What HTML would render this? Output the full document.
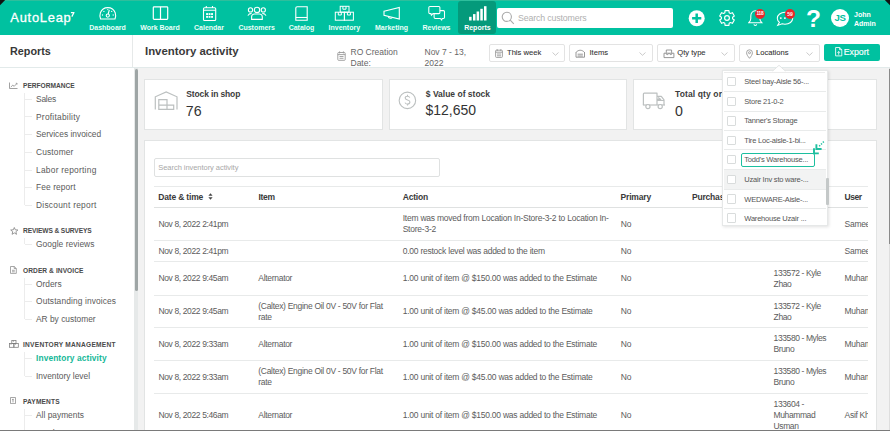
<!DOCTYPE html>
<html><head><meta charset="utf-8">
<style>
*{box-sizing:border-box;margin:0;padding:0}
html,body{width:890px;height:434px;overflow:hidden;background:#fff;font-family:"Liberation Sans",sans-serif;color:#444}
.a{position:absolute;white-space:nowrap}
#hdr{position:absolute;left:0;top:0;width:890px;height:35.4px;background:#00c1a0}
.nl{position:absolute;top:23.8px;font:bold 7px/8px "Liberation Sans",sans-serif;color:#eafff8;text-align:center;width:60px;margin-left:-30px}
.ni{position:absolute;top:5px}
#side{position:absolute;left:0;top:35px;width:133px;height:395px;background:#fff}
.sec{position:absolute;left:23px;font:bold 6.6px/8px "Liberation Sans",sans-serif;color:#4a4a4a;letter-spacing:0}
.it{position:absolute;left:36px;font:8.4px/10px "Liberation Sans",sans-serif;color:#5a5a5a}
.tree{position:absolute;left:24px;width:1px;background:#ececec}
.dash{position:absolute;left:25px;width:7px;height:1px;background:#ececec}
.si{position:absolute;left:9px}
#content{position:absolute;left:138px;top:68px;width:752px;height:362px;background:#f2f2f2}
.card{position:absolute;background:#fff;border:1px solid #e2e4e4}
.sel{position:absolute;top:44px;height:18px;border:1px solid #e3e3e3;border-radius:2px;background:#fff}
.sel .t{position:absolute;top:3.3px;font:7.6px/9px "Liberation Sans",sans-serif;color:#333;-webkit-text-stroke:0.08px #333}
.chev{position:absolute;top:6.6px;width:7px;height:4px}
.th{position:absolute;top:192px;font:bold 8px/9px "Liberation Sans",sans-serif;color:#3a3a3a}
.td{position:absolute;font:7.8px/10.8px "Liberation Sans",sans-serif;color:#555}
.hl{position:absolute;left:154px;width:713px;height:1px;background:#e6e6e6}
.dd{position:absolute;left:722px;width:104px;height:1px;background:#e9e9e9}
.cb{position:absolute;left:726.8px;width:9.4px;height:9.4px;border:1px solid #d9dcdc;border-radius:1px;background:#fff}
.dt{position:absolute;left:744px;font:7px/9px "Liberation Sans",sans-serif;color:#555}
</style></head><body>

<!-- HEADER -->
<div id="hdr">
  <div class="a" style="left:0;top:0;width:890px;height:1px;background:#2ebe9c"></div>
  <svg class="a" style="left:0;top:0" width="7" height="7"><path d="M0 0H5.2L0 5.2Z" fill="#111"/></svg>
  <svg class="a" style="left:883px;top:0" width="7" height="7"><path d="M1.8 0H7V5.2Z" fill="#111"/></svg>
  <div class="a" style="left:10.3px;top:9.9px;font:12.9px/15px 'Liberation Sans',sans-serif;color:#fff;letter-spacing:0.75px;-webkit-text-stroke:0.3px #fff">AutoLeap</div>
  <svg class="a" style="left:70px;top:11px" width="5" height="7" viewBox="0 0 5 7" fill="none" stroke="#fff" stroke-width="1.25" stroke-linejoin="round"><path d="M0.9 1.5H4L1.8 5.6"/></svg>

  <!-- Dashboard -->
  <svg class="ni" style="left:96px;top:3px" width="24" height="20" viewBox="0 0 24 20" fill="none" stroke="#fff" stroke-width="1.1"><path d="M4.6 16C3.8 14 3.7 11.8 4.4 9.8 5.6 6.4 8.5 4.6 11.8 4.6 15.1 4.6 18 6.4 19.2 9.8 19.9 11.8 19.8 14 19 16Z"/><circle cx="11.8" cy="12.6" r="1.6"/><path d="M12.2 11L13.3 6.8"/><g fill="#fff" stroke="none"><circle cx="7.9" cy="8.4" r=".65"/><circle cx="6.5" cy="12" r=".65"/><circle cx="15.7" cy="8.4" r=".65"/><circle cx="17.2" cy="12" r=".65"/><circle cx="11.8" cy="6.6" r=".6"/></g></svg>
  <div class="nl" style="left:107.5px">Dashboard</div>
  <!-- Work board -->
  <svg class="ni" style="left:152px;top:5px" width="17" height="16" viewBox="0 0 17 16" fill="none" stroke="#fff" stroke-width="1.2"><rect x="1.3" y="1.8" width="14.4" height="12.6" rx="0.8"/><path d="M8.5 1.8v12.6"/></svg>
  <div class="nl" style="left:160px">Work Board</div>
  <!-- Calendar -->
  <svg class="ni" style="left:202px;top:5px" width="15" height="17" viewBox="0 0 15 17" fill="none" stroke="#fff" stroke-width="1.1"><rect x="1.5" y="2.8" width="12.2" height="12.7" rx="1"/><path d="M1.5 5.3h12.2M4.3 1v2M10.5 1v2"/><g fill="#fff" stroke="none"><rect x="4.1" y="8.1" width="1.9" height="1.9"/><rect x="6.6" y="8.1" width="1.9" height="1.9"/><rect x="9.1" y="8.1" width="1.9" height="1.9"/><rect x="4.1" y="10.9" width="1.9" height="1.9"/><rect x="6.6" y="10.9" width="1.9" height="1.9"/><rect x="9.1" y="10.9" width="1.9" height="1.9"/></g></svg>
  <div class="nl" style="left:209px">Calendar</div>
  <!-- Customers -->
  <svg class="ni" style="left:244px;top:3px" width="26" height="20" viewBox="0 0 26 20" fill="none" stroke="#fff" stroke-width="1.1"><circle cx="13" cy="6.9" r="2.7"/><circle cx="6.5" cy="6.9" r="2.1"/><circle cx="19.3" cy="6.9" r="2.1"/><path d="M7.6 16.4V13.8C7.6 12 9.3 11 10.5 11H15.4C16.6 11 18.3 12 18.3 13.8V16.4Z"/><path d="M3.9 12.6C4.6 11 5.8 10.4 7.6 10.4M22 12.6C21.3 11 20.1 10.4 18.3 10.4"/></svg>
  <div class="nl" style="left:256.7px">Customers</div>
  <!-- Catalog -->
  <svg class="ni" style="left:290px;top:3px" width="22" height="20" viewBox="0 0 22 20" fill="none" stroke="#fff" stroke-width="1.1"><path d="M5.8 17.2V5C5.8 4.2 6.4 3.7 7.2 3.7H17.2V17.2Z"/><path d="M5.8 14.5H17.2"/></svg>
  <div class="nl" style="left:301.5px">Catalog</div>
  <!-- Inventory -->
  <svg class="ni" style="left:332px;top:3px" width="26" height="20" viewBox="0 0 26 20" fill="none" stroke="#fff" stroke-width="1"><rect x="8.2" y="3.3" width="8.8" height="5.9"/><rect x="3.3" y="9.2" width="9.1" height="8"/><rect x="12.4" y="9.2" width="9" height="8"/><path d="M10.9 3.3V6.2H14V3.3M6.3 9.2V12H9.3V9.2M15.4 9.2V12H18.4V9.2"/></svg>
  <div class="nl" style="left:344.3px">Inventory</div>
  <!-- Marketing -->
  <svg class="ni" style="left:378px;top:3px" width="26" height="20" viewBox="0 0 26 20" fill="none" stroke="#fff" stroke-width="1.1"><path d="M6 8.3L21.3 4.5V16L6 12.3Z"/><path d="M10.3 13.3C10.3 15.5 13.8 15.8 14.3 14.3"/></svg>
  <div class="nl" style="left:391.5px">Marketing</div>
  <!-- Reviews -->
  <svg class="ni" style="left:424px;top:3px" width="26" height="20" viewBox="0 0 26 20" fill="none" stroke="#fff" stroke-width="1.05"><path d="M6 3.5H14.8C15.4 3.5 15.9 4 15.9 4.6V9.5C15.9 10.1 15.4 10.6 14.8 10.6H9L7.4 12.3 7 10.6H6C5.4 10.6 4.8 10.1 4.8 9.5V4.6C4.8 4 5.4 3.5 6 3.5Z"/><path d="M15.9 7.6H19.4C20 7.6 20.5 8.1 20.5 8.7V14.3C20.5 14.9 20 15.4 19.4 15.4H18.2L17.7 17 16.3 15.4H11.2C10.6 15.4 10.1 14.9 10.1 14.3V10.6"/></svg>
  <div class="nl" style="left:436.5px">Reviews</div>
  <!-- Reports active -->
  <div class="a" style="left:458.3px;top:1.2px;width:37.5px;height:33.2px;background:#049a7b;border-radius:3px"></div>
  <svg class="ni" style="left:464px;top:3px" width="26" height="20" viewBox="0 0 26 20" fill="#fff"><rect x="5.1" y="13.8" width="2.5" height="3.7"/><rect x="9" y="11.1" width="2.5" height="6.4"/><rect x="12.6" y="8.5" width="2.5" height="9"/><rect x="16.3" y="5.8" width="2.5" height="11.7"/><rect x="20" y="3.2" width="2.5" height="14.3"/></svg>
  <div class="nl" style="left:477.4px;color:#fff">Reports</div>

  <!-- search -->
  <div class="a" style="left:497px;top:8px;width:176px;height:20px;background:#fff;border-radius:2px"></div>
  <svg class="a" style="left:501px;top:11px" width="14" height="14" viewBox="0 0 14 14" fill="none" stroke="#a9a9a9" stroke-width="1.1"><circle cx="5.8" cy="5.8" r="4.6"/><path d="M9.2 9.2L12.8 12.8"/></svg>
  <div class="a" style="left:518px;top:12.6px;font:8.8px/11px 'Liberation Sans',sans-serif;color:#b0b0b0;letter-spacing:-0.15px">Search customers</div>

  <!-- plus -->
  <svg class="a" style="left:688px;top:10px" width="18" height="17" viewBox="0 0 18 17"><circle cx="8.7" cy="8.25" r="8" fill="#fff"/><path d="M8.7 3.6v9.3M4.1 8.25h9.2" stroke="#00c1a0" stroke-width="2.5"/></svg>
  <!-- gear -->
  <svg class="a" style="left:718px;top:9.3px" width="18" height="18" viewBox="0 0 18 18" fill="none" stroke="#fff" stroke-width="1.1" stroke-linejoin="round"><path d="M6.82 3.84 L7.05 1.66 L10.95 1.66 L11.18 3.84 L12.38 4.53 L14.38 3.64 L16.34 7.02 L14.56 8.31 L14.56 9.69 L16.34 10.98 L14.38 14.36 L12.38 13.47 L11.18 14.16 L10.95 16.34 L7.05 16.34 L6.82 14.16 L5.62 13.47 L3.62 14.36 L1.66 10.98 L3.44 9.69 L3.44 8.31 L1.66 7.02 L3.62 3.64 L5.62 4.53Z"/><circle cx="9" cy="9" r="2.4" stroke-width="1.2"/></svg>
  <!-- bell -->
  <svg class="a" style="left:748px;top:10px" width="16" height="17" viewBox="0 0 16 17" fill="none" stroke="#fff" stroke-width="1.05"><path d="M0.8 12.7C2 11.5 2.8 10.5 2.8 8.5V6C2.8 3 4.8 0.8 7.3 0.8S11.8 3 11.8 6V8.5C11.8 10.5 12.6 11.5 13.8 12.7Z"/><path d="M6 14.3a1.3 1.2 0 0 0 2.6 0"/></svg>
  <div class="a" style="left:755px;top:8.8px;width:10px;height:10px;border-radius:50%;background:#e8262c;color:#fff;font:bold 4.8px/10px 'Liberation Sans',sans-serif;text-align:center;letter-spacing:-0.2px">118</div>
  <!-- chat -->
  <svg class="a" style="left:776px;top:10.5px" width="19" height="16" viewBox="0 0 19 16" fill="none" stroke="#fff" stroke-width="1.05"><path d="M9 1.2C4.8 1.2 1.3 3.9 1.3 7.2c0 1.6.8 3 2.1 4.1L1.7 14.4l4.4-1.6c.9.3 1.9.4 2.9.4 4.4 0 7.7-2.6 7.7-5.9S13.4 1.2 9 1.2Z"/><circle cx="4.8" cy="7.1" r=".45" fill="#fff"/><circle cx="8.9" cy="7.1" r=".45" fill="#fff"/></svg>
  <div class="a" style="left:785px;top:8.8px;width:10px;height:10px;border-radius:50%;background:#e8262c;color:#fff;font:bold 5px/10px 'Liberation Sans',sans-serif;text-align:center">59</div>
  <!-- ? -->
  <div class="a" style="left:806px;top:6.2px;font:bold 24.5px/25px 'Liberation Sans',sans-serif;color:#fff">?</div>
  <!-- avatar -->
  <div class="a" style="left:831px;top:9.2px;width:18px;height:18px;border-radius:50%;background:#fff;color:#00c1a0;font:bold 9.6px/18px 'Liberation Sans',sans-serif;text-align:center;letter-spacing:-0.3px">JS</div>
  <div class="a" style="left:854px;top:9.5px;font:bold 7px/9.4px 'Liberation Sans',sans-serif;color:#fff">John<br>Admin</div>
</div>

<!-- SIDEBAR -->
<div class="a" style="left:132px;top:35px;width:1px;height:33px;background:#e6e9e9"></div>
<div class="a" style="left:10px;top:44.8px;font:bold 10.8px/13px 'Liberation Sans',sans-serif;color:#383838">Reports</div>

<div id="sidebody">
<div class="sec" style="top:81.7px;letter-spacing:0px">PERFORMANCE</div>
<svg class="a" style="left:9px;top:81.5px" width="9" height="7" viewBox="0 0 9 7" fill="none" stroke="#8a8a8a" stroke-width="0.8"><path d="M0.5 0.5V6.5H8.5"/><path d="M1.8 5L3.8 3.2 5.2 4.3 7.8 1.6"/><path d="M6.8 1.3h1.2v1.2" /></svg>
<div class="tree" style="top:92.5px;height:112.5px"></div>
<div class="it" style="top:93.7px;letter-spacing:-0.2px">Sales</div>
<div class="dash" style="top:98.6px"></div>
<div class="it" style="top:111.5px;letter-spacing:0.25px">Profitability</div>
<div class="dash" style="top:116.4px"></div>
<div class="it" style="top:129.2px">Services invoiced</div>
<div class="dash" style="top:134.1px"></div>
<div class="it" style="top:146.9px;letter-spacing:0.15px">Customer</div>
<div class="dash" style="top:151.8px"></div>
<div class="it" style="top:164.6px;letter-spacing:0.25px">Labor reporting</div>
<div class="dash" style="top:169.5px"></div>
<div class="it" style="top:182.3px;letter-spacing:0.1px">Fee report</div>
<div class="dash" style="top:187.2px"></div>
<div class="it" style="top:200.1px;letter-spacing:0.25px">Discount report</div>
<div class="dash" style="top:205.0px"></div>
<div class="sec" style="top:227.4px;letter-spacing:-0.1px">REVIEWS &amp; SURVEYS</div>
<svg class="a" style="left:9.5px;top:226.7px" width="9" height="8" viewBox="0 0 9 8" fill="none" stroke="#7a7a7a" stroke-width="0.75"><path d="M4.3 0.5L5.3 2.8 7.9 3 5.9 4.7 6.5 7.3 4.3 5.9 2.1 7.3 2.7 4.7 0.7 3 3.3 2.8Z"/></svg>
<div class="tree" style="top:238.2px;height:5.9px"></div>
<div class="it" style="top:239.2px;letter-spacing:0.05px">Google reviews</div>
<div class="dash" style="top:244.1px"></div>
<div class="sec" style="top:266.7px;letter-spacing:0.08px">ORDER &amp; INVOICE</div>
<svg class="a" style="left:10px;top:266.0px" width="7" height="8" viewBox="0 0 7 8" fill="none" stroke="#8a8a8a" stroke-width="0.75"><path d="M0.5 0.5H4.2L6.3 2.5V7.4H0.5Z"/><path d="M4.2 0.5V2.5H6.3"/><path d="M2 4.3h2.8M2 5.8h2.8"/></svg>
<div class="tree" style="top:277.5px;height:41.7px"></div>
<div class="it" style="top:278.6px">Orders</div>
<div class="dash" style="top:283.5px"></div>
<div class="it" style="top:296.4px;letter-spacing:0.12px">Outstanding invoices</div>
<div class="dash" style="top:301.3px"></div>
<div class="it" style="top:314.3px">AR by customer</div>
<div class="dash" style="top:319.2px"></div>
<div class="sec" style="top:341.1px;letter-spacing:0.25px">INVENTORY MANAGEMENT</div>
<svg class="a" style="left:9.2px;top:340.4px" width="10" height="8" viewBox="0 0 10 8" fill="none" stroke="#7a7a7a" stroke-width="0.75"><rect x="2.8" y="0.5" width="4.2" height="3"/><rect x="0.5" y="3.5" width="4.4" height="3.8"/><rect x="4.9" y="3.5" width="4.4" height="3.8"/><path d="M4.4 0.5v1.2M2 3.5v1.2M6.6 3.5v1.2"/></svg>
<div class="tree" style="top:351.9px;height:24.1px"></div>
<div class="it" style="top:353.2px;color:#16b898;font-weight:bold;letter-spacing:0.1px">Inventory activity</div>
<div class="dash" style="top:358.1px"></div>
<div class="it" style="top:371.1px">Inventory level</div>
<div class="dash" style="top:376.0px"></div>
<div class="sec" style="top:398.0px;letter-spacing:0.15px">PAYMENTS</div>
<svg class="a" style="left:9.8px;top:397.3px" width="6" height="7" viewBox="0 0 6 7" fill="none" stroke="#8a8a8a" stroke-width="0.75"><path d="M0.5 0.5H5.5V6.6H0.5Z"/><path d="M3 1.8v3.6M2 2.6h1.6"/></svg>
<div class="tree" style="top:408.8px;height:21.2px"></div>
<div class="it" style="top:409.8px">All payments</div>
<div class="dash" style="top:414.7px"></div>
<div class="it" style="top:427.6px">Batch payments</div>
<div class="dash" style="top:432.5px"></div>

</div>

<!-- SUBHEADER -->
<div class="a" style="left:145px;top:44px;font:bold 11.4px/14px 'Liberation Sans',sans-serif;color:#3a3a3a">Inventory activity</div>
<svg class="a" style="left:337px;top:51px" width="9" height="10" viewBox="0 0 9 10" fill="none" stroke="#9a9a9a" stroke-width="0.9"><rect x="0.8" y="1.5" width="7.4" height="7.8" rx="0.8"/><path d="M0.8 3.6h7.4M2.6 0.4v2M6.4 0.4v2M2.5 5.5h4M2.5 7.3h4"/></svg>
<div class="a" style="left:350.5px;top:46.9px;font:8.5px/10.7px 'Liberation Sans',sans-serif;color:#666">RO Creation<br>Date:</div>
<div class="a" style="left:424.5px;top:46.9px;font:8.5px/10.7px 'Liberation Sans',sans-serif;color:#666">Nov 7 - 13,<br>2022</div>

<div class="sel" style="left:489px;width:75.5px"><svg class="a" style="left:5px;top:4px" width="8" height="9" viewBox="0 0 8 9" fill="none" stroke="#999" stroke-width="0.9"><rect x="0.6" y="1.2" width="6.8" height="7.2" rx="0.8"/><path d="M0.6 3.2h6.8M2.2 0.2v1.8M5.8 0.2v1.8M2 5h4M2 6.8h4"/></svg><div class="t" style="left:17px">This week</div><svg class="chev" style="left:62.0px" viewBox="0 0 7 4" fill="none" stroke="#c4c4c4" stroke-width="0.9"><path d="M0.5 0.5L3.5 3.3 6.5 0.5"/></svg></div>
<div class="sel" style="left:569px;width:84px"><svg class="a" style="left:5px;top:3.6px" width="11" height="9" viewBox="0 0 11 9" fill="none" stroke="#8c8c8c" stroke-width="0.9"><path d="M1.2 3.2C3.5 0.6 7 0.6 9.3 3.2"/><path d="M1 3V8.2H9.5V3"/><path d="M2.6 5.2H7.9M2.6 7H7.9"/></svg><div class="t" style="left:19.5px">Items</div><svg class="chev" style="left:69.0px" viewBox="0 0 7 4" fill="none" stroke="#c4c4c4" stroke-width="0.9"><path d="M0.5 0.5L3.5 3.3 6.5 0.5"/></svg></div>
<div class="sel" style="left:657px;width:77.5px"><svg class="a" style="left:5px;top:3.5px" width="12" height="10" viewBox="0 0 12 10" fill="none" stroke="#8c8c8c" stroke-width="0.9"><path d="M3.3 3.8V1H8.6V3.8"/><path d="M1 4.2H10.9V8.6H1Z"/><path d="M2.8 4.6L4.3 5.6 5.8 4.6M6.3 4.6L7.8 5.6 9.3 4.6" stroke-width="1"/></svg><div class="t" style="left:19.3px">Qty type</div><svg class="chev" style="left:63.0px" viewBox="0 0 7 4" fill="none" stroke="#c4c4c4" stroke-width="0.9"><path d="M0.5 0.5L3.5 3.3 6.5 0.5"/></svg></div>
<div class="sel" style="left:739px;width:80.5px"><svg class="a" style="left:5.5px;top:3.5px" width="7" height="10" viewBox="0 0 7 10" fill="none" stroke="#999" stroke-width="0.9"><path d="M3.5 9.3C1.8 7.2 0.6 5.6 0.6 3.7a2.9 2.9 0 0 1 5.8 0c0 1.9-1.2 3.5-2.9 5.6Z"/><circle cx="3.5" cy="3.7" r="1"/></svg><div class="t" style="left:16px">Locations</div><svg class="chev" style="left:66.0px" viewBox="0 0 7 4" fill="none" stroke="#c4c4c4" stroke-width="0.9"><path d="M0.5 0.5L3.5 3.3 6.5 0.5"/></svg></div>
<div class="a" style="left:824px;top:44px;width:56px;height:17px;background:#00c1a0;border-radius:2px"></div>
<svg class="a" style="left:834.6px;top:46.6px" width="8" height="10" viewBox="0 0 8 10" fill="none" stroke="#fff" stroke-width="0.85"><path d="M0.6 0.5H4.7L6.8 2.6V8.9H0.6Z"/><path d="M4.6 0.5V2.7H6.8"/><path d="M3.7 7.7V4.6M2.5 5.8L3.7 4.5 4.9 5.8"/></svg>
<div class="a" style="left:843.8px;top:47px;font:8.8px/10px 'Liberation Sans',sans-serif;color:#fff;letter-spacing:-0.05px;-webkit-text-stroke:0.15px #fff">Export</div>

<!-- CONTENT -->
<div id="content"></div>
<div class="a" style="left:0;top:67.4px;width:890px;height:1px;background:#e2eaea"></div>
<div class="a" style="left:134.3px;top:68px;width:3.8px;height:362px;background:#e6e9e9"></div>
<div class="a" style="left:134.5px;top:69px;width:3.5px;height:222px;background:#9ea5a5;border-radius:2px"></div>
<div class="a" style="left:888.8px;top:68px;width:1.2px;height:362px;background:#dedede"></div>
<div class="a" style="left:888.6px;top:69px;width:1.4px;height:175px;background:#8a8a8a"></div>

<div class="card" style="left:144px;top:79px;width:238.6px;height:50.5px"></div>
<div class="card" style="left:389px;top:79px;width:237.5px;height:50.5px"></div>
<div class="card" style="left:633px;top:79px;width:243.5px;height:50.5px"></div>

<div class="card" style="left:144px;top:140px;width:732.6px;height:300px"></div>

<!-- MAIN -->
<svg class="a" style="left:153.5px;top:90.5px" width="24" height="19" viewBox="0 0 24 19" fill="none" stroke="#bcc0c0" stroke-width="1.2"><path d="M1.3 18.4V5.8L12.2 1 23 5.8V18.4"/><path d="M4.8 18.4V8.7H13V18.4ZM4.8 14.2H19.7V18.4H13"/></svg>
<div class="a" style="left:186.3px;top:89.2px;font:bold 8.5px/10px 'Liberation Sans',sans-serif;color:#3c3c3c;letter-spacing:-0.14px">Stock in shop</div>
<div class="a" style="left:185.8px;top:103.0px;font:14.2px/16px 'Liberation Sans',sans-serif;color:#333">76</div>
<svg class="a" style="left:398px;top:91px" width="19" height="19" viewBox="0 0 19 19" fill="none" stroke="#bcc0c0" stroke-width="1.1"><circle cx="9.4" cy="9.4" r="8.25"/><path d="M11.8 6.6C11.4 5.7 10.6 5.2 9.5 5.2 8.2 5.2 7.2 5.9 7.2 7 7.2 8.2 8.3 8.7 9.5 9 10.8 9.3 11.9 9.9 11.9 11.1 11.9 12.3 10.9 13.1 9.5 13.1 8.3 13.1 7.4 12.5 7 11.6M9.5 3.8V5.2M9.5 13.1V14.6"/></svg>
<div class="a" style="left:425.8px;top:89.2px;font:bold 8.5px/10px 'Liberation Sans',sans-serif;color:#3c3c3c">$ Value of stock</div>
<div class="a" style="left:425.5px;top:102.1px;font:14px/16px 'Liberation Sans',sans-serif;color:#333">$12,650</div>
<svg class="a" style="left:642px;top:92px" width="24" height="18" viewBox="0 0 24 18" fill="none" stroke="#bcc0c0" stroke-width="1.2" stroke-linejoin="round"><path d="M1.4 13V2C1.4 1.5 1.8 1.1 2.3 1.1H15V13"/><path d="M15 4.3H19.3L22 7.8V13"/><path d="M16.2 5.5L18.8 7.4H15M15 8.5H22"/><path d="M0.9 13H23"/><circle cx="5.9" cy="14.6" r="2.1" fill="#fff"/><circle cx="18.2" cy="14.6" r="2.1" fill="#fff"/></svg>
<div class="a" style="left:675px;top:89.2px;font:bold 8.5px/10px 'Liberation Sans',sans-serif;color:#3c3c3c;letter-spacing:0.12px">Total qty ordered</div>
<div class="a" style="left:675px;top:103.0px;font:14.2px/16px 'Liberation Sans',sans-serif;color:#333">0</div>
<div class="a" style="left:153.8px;top:157.8px;width:286.2px;height:19px;border:1px solid #dfe1e1;border-radius:2px;background:#fff"></div>
<div class="a" style="left:158.3px;top:163.1px;font:7.5px/9px 'Liberation Sans',sans-serif;color:#a8a8a8;letter-spacing:-0.05px">Search inventory activity</div>
<div class="a" style="left:154px;top:185px;width:713.5px;height:250px;overflow:hidden">
<div class="a" style="left:0.0px;top:0.8px;width:714px;height:1px;background:#e8eaea"></div>
<div class="a" style="left:4.3px;top:6.6px;font:bold 8.5px/10px 'Liberation Sans',sans-serif;color:#3a3a3a;letter-spacing:-0.18px">Date &amp; time</div>
<div class="a" style="left:104.5px;top:6.6px;font:bold 8.5px/10px 'Liberation Sans',sans-serif;color:#3a3a3a;letter-spacing:-0.3px">Item</div>
<div class="a" style="left:248.7px;top:6.6px;font:bold 8.5px/10px 'Liberation Sans',sans-serif;color:#3a3a3a;letter-spacing:-0.18px">Action</div>
<div class="a" style="left:466.5px;top:6.6px;font:bold 8.5px/10px 'Liberation Sans',sans-serif;color:#3a3a3a;letter-spacing:-0.16px">Primary</div>
<div class="a" style="left:537.9px;top:6.6px;font:bold 8.5px/10px 'Liberation Sans',sans-serif;color:#3a3a3a;letter-spacing:-0.18px">Purchase price</div>
<div class="a" style="left:619.6px;top:6.6px;font:bold 8.5px/10px 'Liberation Sans',sans-serif;color:#3a3a3a;letter-spacing:-0.18px">Estimate</div>
<div class="a" style="left:690.4px;top:6.6px;font:bold 8.5px/10px 'Liberation Sans',sans-serif;color:#3a3a3a;letter-spacing:-0.4px">User</div>
<svg class="a" style="left:54.3px;top:8.0px" width="5" height="7" viewBox="0 0 5 7" fill="#444"><path d="M2.5 0.2L4.6 2.8H0.4Z"/><path d="M2.5 6.8L4.6 4.2H0.4Z"/></svg>
<div class="a" style="left:0.0px;top:22.1px;width:714px;height:1.3px;background:#dfe1e1"></div>
<div class="a" style="left:0.0px;top:54.9px;width:714px;height:1px;background:#e8eaea"></div>
<div class="a" style="left:4.4px;top:33.7px;font:8.5px/11.1px 'Liberation Sans',sans-serif;color:#5c5c5c;letter-spacing:-0.37px">Nov 8, 2022 2:41pm</div>
<div class="a" style="left:248.7px;top:28.2px;font:8.5px/11.1px 'Liberation Sans',sans-serif;color:#5c5c5c;letter-spacing:-0.24px">Item was moved from Location In-Store-3-2 to Location In-<br>Store-3-2</div>
<div class="a" style="left:466.7px;top:33.7px;font:8.5px/11.1px 'Liberation Sans',sans-serif;color:#5c5c5c;letter-spacing:-0.2px">No</div>
<div class="a" style="left:690.6px;top:33.7px;font:8.5px/11.1px 'Liberation Sans',sans-serif;color:#5c5c5c;letter-spacing:-0.3px">Sameer Ahmed</div>
<div class="a" style="left:0.0px;top:76.1px;width:714px;height:1px;background:#e8eaea"></div>
<div class="a" style="left:4.4px;top:61.2px;font:8.5px/11.1px 'Liberation Sans',sans-serif;color:#5c5c5c;letter-spacing:-0.37px">Nov 8, 2022 2:41pm</div>
<div class="a" style="left:248.7px;top:61.2px;font:8.5px/11.1px 'Liberation Sans',sans-serif;color:#5c5c5c;letter-spacing:-0.24px">0.00 restock level was added to the item</div>
<div class="a" style="left:466.7px;top:61.2px;font:8.5px/11.1px 'Liberation Sans',sans-serif;color:#5c5c5c;letter-spacing:-0.2px">No</div>
<div class="a" style="left:690.6px;top:61.2px;font:8.5px/11.1px 'Liberation Sans',sans-serif;color:#5c5c5c;letter-spacing:-0.3px">Sameer Ahmed</div>
<div class="a" style="left:0.0px;top:109.6px;width:714px;height:1px;background:#e8eaea"></div>
<div class="a" style="left:4.4px;top:88.3px;font:8.5px/11.1px 'Liberation Sans',sans-serif;color:#5c5c5c;letter-spacing:-0.37px">Nov 8, 2022 9:45am</div>
<div class="a" style="left:104.3px;top:88.3px;font:8.5px/11.1px 'Liberation Sans',sans-serif;color:#5c5c5c;letter-spacing:-0.3px">Alternator</div>
<div class="a" style="left:248.7px;top:88.3px;font:8.5px/11.1px 'Liberation Sans',sans-serif;color:#5c5c5c;letter-spacing:-0.24px">1.00 unit of item @ $150.00 was added to the Estimate</div>
<div class="a" style="left:466.7px;top:88.3px;font:8.5px/11.1px 'Liberation Sans',sans-serif;color:#5c5c5c;letter-spacing:-0.2px">No</div>
<div class="a" style="left:619.6px;top:82.8px;font:8.5px/11.1px 'Liberation Sans',sans-serif;color:#5c5c5c;letter-spacing:-0.4px">133572 - Kyle<br>Zhao</div>
<div class="a" style="left:690.6px;top:88.3px;font:8.5px/11.1px 'Liberation Sans',sans-serif;color:#5c5c5c;letter-spacing:-0.3px">Muhammad</div>
<div class="a" style="left:0.0px;top:142.0px;width:714px;height:1px;background:#e8eaea"></div>
<div class="a" style="left:4.4px;top:121.2px;font:8.5px/11.1px 'Liberation Sans',sans-serif;color:#5c5c5c;letter-spacing:-0.37px">Nov 8, 2022 9:45am</div>
<div class="a" style="left:104.3px;top:115.7px;font:8.5px/11.1px 'Liberation Sans',sans-serif;color:#5c5c5c;letter-spacing:-0.3px">(Caltex) Engine Oil 0V - 50V for Flat<br>rate</div>
<div class="a" style="left:248.7px;top:121.2px;font:8.5px/11.1px 'Liberation Sans',sans-serif;color:#5c5c5c;letter-spacing:-0.24px">1.00 unit of item @ $45.00 was added to the Estimate</div>
<div class="a" style="left:466.7px;top:121.2px;font:8.5px/11.1px 'Liberation Sans',sans-serif;color:#5c5c5c;letter-spacing:-0.2px">No</div>
<div class="a" style="left:619.6px;top:115.7px;font:8.5px/11.1px 'Liberation Sans',sans-serif;color:#5c5c5c;letter-spacing:-0.4px">133572 - Kyle<br>Zhao</div>
<div class="a" style="left:690.6px;top:121.2px;font:8.5px/11.1px 'Liberation Sans',sans-serif;color:#5c5c5c;letter-spacing:-0.3px">Muhammad</div>
<div class="a" style="left:0.0px;top:174.9px;width:714px;height:1px;background:#e8eaea"></div>
<div class="a" style="left:4.4px;top:153.7px;font:8.5px/11.1px 'Liberation Sans',sans-serif;color:#5c5c5c;letter-spacing:-0.37px">Nov 8, 2022 9:33am</div>
<div class="a" style="left:104.3px;top:153.7px;font:8.5px/11.1px 'Liberation Sans',sans-serif;color:#5c5c5c;letter-spacing:-0.3px">Alternator</div>
<div class="a" style="left:248.7px;top:153.7px;font:8.5px/11.1px 'Liberation Sans',sans-serif;color:#5c5c5c;letter-spacing:-0.24px">1.00 unit of item @ $150.00 was added to the Estimate</div>
<div class="a" style="left:466.7px;top:153.7px;font:8.5px/11.1px 'Liberation Sans',sans-serif;color:#5c5c5c;letter-spacing:-0.2px">No</div>
<div class="a" style="left:619.6px;top:148.2px;font:8.5px/11.1px 'Liberation Sans',sans-serif;color:#5c5c5c;letter-spacing:-0.4px">133580 - Myles<br>Bruno</div>
<div class="a" style="left:690.6px;top:153.7px;font:8.5px/11.1px 'Liberation Sans',sans-serif;color:#5c5c5c;letter-spacing:-0.3px">Muhammad</div>
<div class="a" style="left:0.0px;top:208.0px;width:714px;height:1px;background:#e8eaea"></div>
<div class="a" style="left:4.4px;top:186.9px;font:8.5px/11.1px 'Liberation Sans',sans-serif;color:#5c5c5c;letter-spacing:-0.37px">Nov 8, 2022 9:33am</div>
<div class="a" style="left:104.3px;top:181.4px;font:8.5px/11.1px 'Liberation Sans',sans-serif;color:#5c5c5c;letter-spacing:-0.3px">(Caltex) Engine Oil 0V - 50V for Flat<br>rate</div>
<div class="a" style="left:248.7px;top:186.9px;font:8.5px/11.1px 'Liberation Sans',sans-serif;color:#5c5c5c;letter-spacing:-0.24px">1.00 unit of item @ $45.00 was added to the Estimate</div>
<div class="a" style="left:466.7px;top:186.9px;font:8.5px/11.1px 'Liberation Sans',sans-serif;color:#5c5c5c;letter-spacing:-0.2px">No</div>
<div class="a" style="left:619.6px;top:181.4px;font:8.5px/11.1px 'Liberation Sans',sans-serif;color:#5c5c5c;letter-spacing:-0.4px">133580 - Myles<br>Bruno</div>
<div class="a" style="left:690.6px;top:186.9px;font:8.5px/11.1px 'Liberation Sans',sans-serif;color:#5c5c5c;letter-spacing:-0.3px">Muhammad</div>
<div class="a" style="left:4.4px;top:225.3px;font:8.5px/11.1px 'Liberation Sans',sans-serif;color:#5c5c5c;letter-spacing:-0.37px">Nov 8, 2022 5:46am</div>
<div class="a" style="left:104.3px;top:225.3px;font:8.5px/11.1px 'Liberation Sans',sans-serif;color:#5c5c5c;letter-spacing:-0.3px">Alternator</div>
<div class="a" style="left:248.7px;top:225.3px;font:8.5px/11.1px 'Liberation Sans',sans-serif;color:#5c5c5c;letter-spacing:-0.24px">1.00 unit of item @ $150.00 was added to the Estimate</div>
<div class="a" style="left:466.7px;top:225.3px;font:8.5px/11.1px 'Liberation Sans',sans-serif;color:#5c5c5c;letter-spacing:-0.2px">No</div>
<div class="a" style="left:619.6px;top:214.2px;font:8.5px/11.1px 'Liberation Sans',sans-serif;color:#5c5c5c;letter-spacing:-0.4px">133604 -<br>Muhammad<br>Usman</div>
<div class="a" style="left:690.6px;top:225.3px;font:8.5px/11.1px 'Liberation Sans',sans-serif;color:#5c5c5c;letter-spacing:-0.3px">Asif Khan</div>
</div>
<div class="a" style="left:721.8px;top:70px;width:106.5px;height:155.5px;background:#fff;border:1px solid #e6e8e8;box-shadow:1px 1px 3px rgba(0,0,0,0.12)"></div>
<svg class="a" style="left:772.2px;top:63.6px" width="14" height="8" viewBox="0 0 14 8"><path d="M0.5 7.2L7 1.3 13.5 7.2" fill="#fff" stroke="#e3e5e5" stroke-width="1"/><path d="M0.5 7.9H13.5" stroke="#fff" stroke-width="1.4"/></svg>
<div class="a" style="left:724px;top:71.5px;width:101px;height:1px;background:#ececec"></div>
<div class="cb" style="top:77.1px"></div>
<div class="a" style="left:744.3px;top:77.3px;font:7.5px/9px 'Liberation Sans',sans-serif;color:#555;letter-spacing:-0.21px">Steel bay-Aisle 56-...</div>
<div class="a" style="left:723.5px;top:90.9px;width:102px;height:1px;background:#e9ebeb"></div>
<div class="cb" style="top:96.6px"></div>
<div class="a" style="left:744.3px;top:96.8px;font:7.5px/9px 'Liberation Sans',sans-serif;color:#555;letter-spacing:-0.21px">Store 21-0-2</div>
<div class="a" style="left:723.5px;top:110.5px;width:102px;height:1px;background:#e9ebeb"></div>
<div class="cb" style="top:116.2px"></div>
<div class="a" style="left:744.3px;top:116.4px;font:7.5px/9px 'Liberation Sans',sans-serif;color:#555;letter-spacing:-0.21px">Tanner's Storage</div>
<div class="a" style="left:723.5px;top:130.0px;width:102px;height:1px;background:#e9ebeb"></div>
<div class="cb" style="top:135.5px"></div>
<div class="a" style="left:744.3px;top:135.7px;font:7.5px/9px 'Liberation Sans',sans-serif;color:#555;letter-spacing:-0.21px">Tire Loc-aisle-1-bi...</div>
<div class="a" style="left:723.5px;top:149.1px;width:102px;height:1px;background:#e9ebeb"></div>
<div class="cb" style="top:154.9px"></div>
<div class="a" style="left:744.3px;top:155.1px;font:7.5px/9px 'Liberation Sans',sans-serif;color:#555;letter-spacing:-0.21px">Todd's Warehouse...</div>
<div class="a" style="left:723.5px;top:169.4px;width:102px;height:19.9px;background:#f2f3f3"></div>
<div class="a" style="left:723.5px;top:168.9px;width:102px;height:1px;background:#e9ebeb"></div>
<div class="cb" style="top:174.8px"></div>
<div class="a" style="left:744.3px;top:175.0px;font:7.5px/9px 'Liberation Sans',sans-serif;color:#555;letter-spacing:-0.21px">Uzair Inv sto ware-...</div>
<div class="a" style="left:723.5px;top:188.8px;width:102px;height:1px;background:#e9ebeb"></div>
<div class="cb" style="top:194.3px"></div>
<div class="a" style="left:744.3px;top:194.5px;font:7.5px/9px 'Liberation Sans',sans-serif;color:#555;letter-spacing:-0.21px">WEDWARE-Aisle-...</div>
<div class="a" style="left:723.5px;top:207.9px;width:102px;height:1px;background:#e9ebeb"></div>
<div class="cb" style="top:213.3px"></div>
<div class="a" style="left:744.3px;top:213.6px;font:7.5px/9px 'Liberation Sans',sans-serif;color:#555;letter-spacing:-0.21px">Warehouse Uzair ...</div>
<div class="a" style="left:741px;top:152.8px;width:74px;height:14px;border:1.3px solid #1cbf9f;border-radius:2px"></div>
<div class="a" style="left:825.5px;top:178px;width:3px;height:27px;background:#c4c8c8;border-radius:1px"></div>
<svg class="a" style="left:810px;top:136px" width="18" height="20" viewBox="0 0 18 20" fill="none" stroke="#1dbf9f" stroke-width="1.9"><path d="M4 12.3V17.4H8.8"/><path d="M6.4 8.2V13H11.6"/><path d="M9.2 10.2L14.6 4.8" stroke-width="1.5" stroke-dasharray="1.3 1.3"/></svg>

<!-- bottom frame -->
<div class="a" style="left:0;top:430px;width:890px;height:1px;background:#7a7a7a"></div>
<div class="a" style="left:0;top:431px;width:890px;height:3px;background:#fff"></div>
</body></html>
